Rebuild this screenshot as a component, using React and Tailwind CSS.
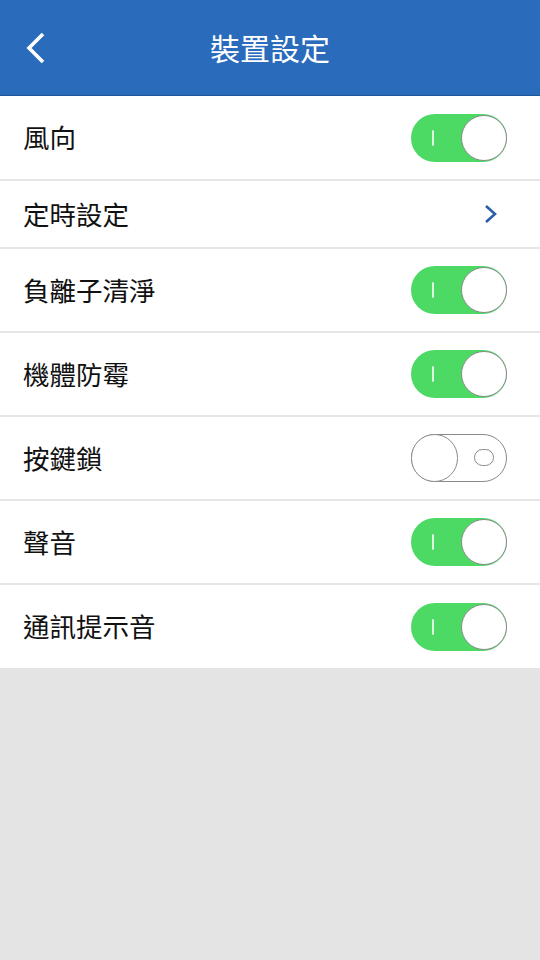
import React, { useState } from 'react';

const font = { fontFamily: '"Noto Sans CJK TC", "Noto Sans", sans-serif' };

function Toggle({ on, onClick }) {
  return (
    <button
      type="button"
      onClick={onClick}
      aria-pressed={on}
      className={`relative w-[96px] h-[48px] rounded-full flex items-center ${on ? 'bg-[#4cd964]' : 'bg-white border-[1.5px] border-[#8a8a8a]'}`}
    >
      {on ? (
        <>
          <span className="absolute left-[21px] top-[16px] w-[2px] h-[16px] bg-white/80 rounded" />
          <span className="absolute right-0 top-[1px] w-[46px] h-[46px] rounded-full bg-white border-[1.5px] border-[#8a8a8a]" />
        </>
      ) : (
        <>
          <span className="absolute left-[-1.5px] top-[-1.5px] w-[47px] h-[48px] rounded-full bg-white border-[1.5px] border-[#8a8a8a]" />
          <span className="absolute right-[12px] top-[14px] w-[20px] h-[17px] rounded-full border-[1.5px] border-[#8a8a8a]" />
        </>
      )}
    </button>
  );
}

export default function App() {
  const [state, setState] = useState({
    wind: true,
    anion: true,
    mold: true,
    lock: false,
    sound: true,
    notify: true,
  });
  const flip = (k) => setState((s) => ({ ...s, [k]: !s[k] }));

  const rows = [
    { key: 'wind', label: '風向', h: 'h-[85px]' },
    { key: 'timer', label: '定時設定', h: 'h-[68px]', link: true },
    { key: 'anion', label: '負離子清淨', h: 'h-[84px]' },
    { key: 'mold', label: '機體防霉', h: 'h-[84px]' },
    { key: 'lock', label: '按鍵鎖', h: 'h-[84px]' },
    { key: 'sound', label: '聲音', h: 'h-[84px]' },
    { key: 'notify', label: '通訊提示音', h: 'h-[83px]' },
  ];

  return (
    <div className="min-h-screen w-full bg-[#e4e4e4] flex flex-col" style={font}>
      <header className="h-[96px] bg-[#2a6bbb] border-b border-[#1f5599] flex items-center relative">
        <button type="button" className="absolute left-[22px] top-[30px] w-[28px] h-[36px]">
          <svg viewBox="0 0 28 36" className="w-full h-full">
            <path d="M21 4 L7 18 L21 32" fill="none" stroke="white" strokeWidth="3.6" />
          </svg>
        </button>
        <h1 className="w-full text-center text-white text-[30px] leading-none pb-[2px]">裝置設定</h1>
      </header>
      <div className="bg-white flex flex-col">
        {rows.map((r, i) => (
          <div
            key={r.key}
            className={`${r.h} flex items-center justify-between pl-[23px] pr-[33px] ${i < rows.length - 1 ? 'border-b-[2px] border-[#e6e6e6]' : ''}`}
          >
            <span className="text-[26.5px] text-[#111] leading-none">{r.label}</span>
            {r.link ? (
              <svg viewBox="0 0 14 20" className="w-[14px] h-[20px] mr-[9px]">
                <path d="M2 2 L11 10 L2 18" fill="none" stroke="#2a5ea8" strokeWidth="2.6" />
              </svg>
            ) : (
              <Toggle on={state[r.key]} onClick={() => flip(r.key)} />
            )}
          </div>
        ))}
      </div>
    </div>
  );
}
